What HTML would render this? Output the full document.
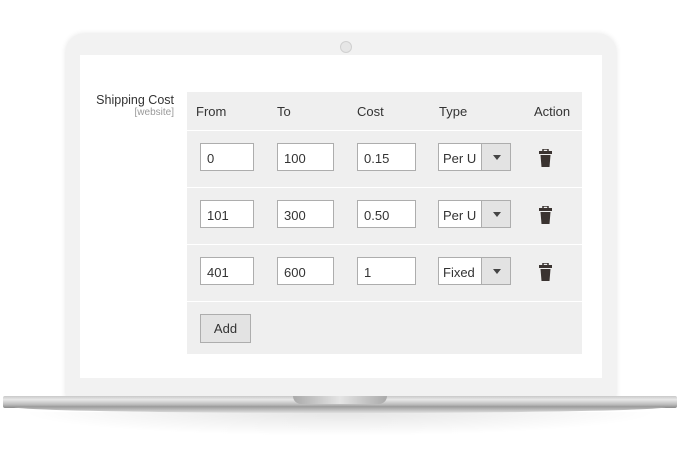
<!DOCTYPE html>
<html><head><meta charset="utf-8"><style>
*{margin:0;padding:0;box-sizing:border-box}
body{width:680px;height:450px;background:#fff;position:relative;overflow:hidden;font-family:"Liberation Sans",sans-serif;color:#333}
.a{position:absolute}
.bezel{left:66px;top:34px;width:550px;height:364px;background:#f2f2f2;border-radius:18px 18px 0 0;box-shadow:0 0 6px rgba(0,0,0,.12)}
.screen{left:80px;top:55px;width:522px;height:323px;background:#fff}
.cam{left:340px;top:41px;width:12px;height:12px;border-radius:50%;background:#e6e6e6;border:1px solid #d0d0d0}
.base{left:3px;top:396px;width:674px;height:12px;background:linear-gradient(#c8c8c8,#e8e8e8 30%,#bdbdbd 70%,#8a8a8a);border-radius:2px}
.base2{left:14px;top:407px;width:652px;height:6px;background:linear-gradient(#a0a0a0,#e0e0e0);border-radius:0 0 50% 50%/0 0 100% 100%}
.shadow{left:20px;top:412px;width:640px;height:24px;background:radial-gradient(ellipse at center top,rgba(0,0,0,.1),rgba(0,0,0,0) 70%)}
.notch{left:293px;top:396px;width:94px;height:8px;background:linear-gradient(90deg,#aaa,#e4e4e4 50%,#aaa);border-radius:0 0 8px 8px}
.tbl{left:187px;top:92px;width:395px;height:262px;background:#efefef}
.line{left:187px;width:395px;height:1px;background:#fff}
.h{top:104px;font-size:13px;color:#333}
.in{height:28px;background:#fff;border:1px solid #adadad;font-size:13px;padding:7px 0 0 6px;color:#333}
.sel{width:73px;height:28px;border:1px solid #adadad;background:#fff;font-size:13px;overflow:hidden;white-space:nowrap}
.sel .ar{position:absolute;left:42px;top:0;width:30px;height:26px;background:#e3e3e3;border-left:1px solid #adadad}
.sel .ar:after{content:"";position:absolute;left:11px;top:11px;border:4px solid transparent;border-top:5px solid #444}
.txt{position:absolute;left:4px;top:7px;width:33px;overflow:hidden}
</style></head><body>
<div class="a shadow"></div>
<div class="a bezel"></div>
<div class="a screen"></div>
<div class="a cam"></div>
<div class="a base"></div>
<div class="a base2"></div>
<div class="a notch"></div>

<div class="a" style="left:60px;top:93px;width:114px;text-align:right;font-size:12.5px;color:#333">Shipping Cost</div>
<div class="a" style="left:60px;top:107px;width:114px;text-align:right;font-size:10px;color:#999">[website]</div>

<div class="a tbl"></div>
<div class="a line" style="top:130px"></div>
<div class="a line" style="top:187px"></div>
<div class="a line" style="top:244px"></div>
<div class="a line" style="top:301px"></div>

<div class="a h" style="left:196px">From</div>
<div class="a h" style="left:277px">To</div>
<div class="a h" style="left:357px">Cost</div>
<div class="a h" style="left:439px">Type</div>
<div class="a h" style="left:534px">Action</div>

<div class="a in" style="left:200px;top:143px;width:54px">0</div>
<div class="a in" style="left:277px;top:143px;width:57px">100</div>
<div class="a in" style="left:357px;top:143px;width:59px">0.15</div>
<div class="a sel" style="left:438px;top:143px"><span class="txt">Per Unit</span><span class="ar"></span></div>

<div class="a in" style="left:200px;top:200px;width:54px">101</div>
<div class="a in" style="left:277px;top:200px;width:57px">300</div>
<div class="a in" style="left:357px;top:200px;width:59px">0.50</div>
<div class="a sel" style="left:438px;top:200px"><span class="txt">Per Unit</span><span class="ar"></span></div>

<div class="a in" style="left:200px;top:257px;width:54px">401</div>
<div class="a in" style="left:277px;top:257px;width:57px">600</div>
<div class="a in" style="left:357px;top:257px;width:59px">1</div>
<div class="a sel" style="left:438px;top:257px"><span class="txt">Fixed</span><span class="ar"></span></div>

<svg class="a" style="left:539px;top:149px" width="13" height="18" viewBox="0 0 13 18"><rect x="4" y="0" width="5" height="3" fill="none" stroke="#3a3330" stroke-width="1.5"/><rect x="0" y="2" width="13" height="3" fill="#3a3330"/><path d="M1.5 6H11.5L10.5 18H2.5Z" fill="#3a3330"/></svg>
<svg class="a" style="left:539px;top:206px" width="13" height="18" viewBox="0 0 13 18"><rect x="4" y="0" width="5" height="3" fill="none" stroke="#3a3330" stroke-width="1.5"/><rect x="0" y="2" width="13" height="3" fill="#3a3330"/><path d="M1.5 6H11.5L10.5 18H2.5Z" fill="#3a3330"/></svg>
<svg class="a" style="left:539px;top:263px" width="13" height="18" viewBox="0 0 13 18"><rect x="4" y="0" width="5" height="3" fill="none" stroke="#3a3330" stroke-width="1.5"/><rect x="0" y="2" width="13" height="3" fill="#3a3330"/><path d="M1.5 6H11.5L10.5 18H2.5Z" fill="#3a3330"/></svg>

<div class="a" style="left:200px;top:314px;width:51px;height:29px;background:#e3e3e3;border:1px solid #adadad;font-size:13px;text-align:center;padding-top:6px">Add</div>
</body></html>
